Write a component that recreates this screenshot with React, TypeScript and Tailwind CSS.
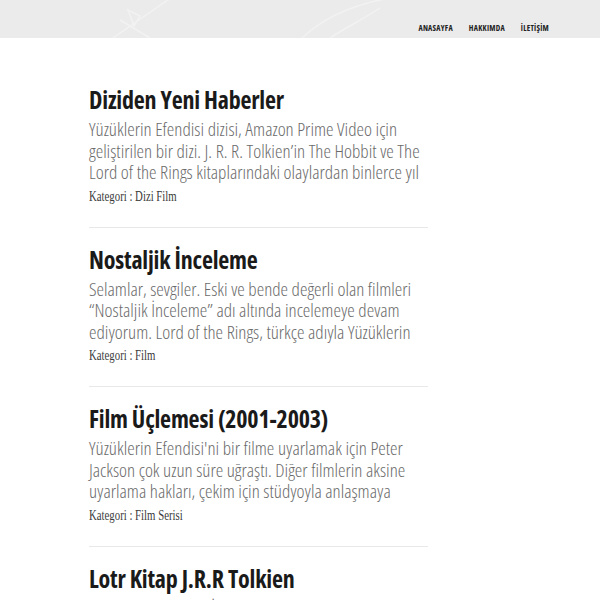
import React from "react";

const posts = [
  {
    title: "Diziden Yeni Haberler",
    body: "Yüzüklerin Efendisi dizisi, Amazon Prime Video için geliştirilen bir dizi. J. R. R. Tolkien’in The Hobbit ve The Lord of the Rings kitaplarındaki olaylardan binlerce yıl",
    cat: "Dizi Film",
  },
  {
    title: "Nostaljik İnceleme",
    body: "Selamlar, sevgiler. Eski ve bende değerli olan filmleri “Nostaljik İnceleme” adı altında incelemeye devam ediyorum. Lord of the Rings, türkçe adıyla Yüzüklerin",
    cat: "Film",
  },
  {
    title: "Film Üçlemesi (2001-2003)",
    body: "Yüzüklerin Efendisi'ni bir filme uyarlamak için Peter Jackson çok uzun süre uğraştı. Diğer filmlerin aksine uyarlama hakları, çekim için stüdyoyla anlaşmaya",
    cat: "Film Serisi",
  },
  {
    title: "Lotr Kitap J.R.R Tolkien",
    body: "Yüzüklerin Efendisi, İngiliz yazar J. R. R. Tolkien tarafından yazılmış fantastik bir roman serisidir.",
    cat: "Kitap",
  },
];

export default function App() {
  return (
    <div className="w-[600px] h-[600px] overflow-hidden bg-white" style={{ fontFamily: "'Open Sans', sans-serif" }}>
      <header className="relative h-[38px] bg-[#ebebeb] overflow-hidden">
        <svg className="absolute left-0 top-0" width="600" height="38" viewBox="0 0 600 38">
          <g fill="none" stroke="#f2f2f2" strokeWidth="1.5">
            <path d="M110 40 L175 -5" />
            <path d="M120 20 L150 38" />
            <path d="M128 10 L140 16 L134 26 Z" />
            <path d="M300 40 C320 20 350 5 390 -2" />
            <path d="M330 38 C345 28 365 18 380 8" />
          </g>
        </svg>
        <nav className="absolute right-[51px] top-[22px] flex gap-[16px] text-[8px] font-bold text-[#222] tracking-[0.25px] [font-stretch:75%]">
          <span>ANASAYFA</span>
          <span>HAKKIMDA</span>
          <span>İLETİŞİM</span>
        </nav>
      </header>
      <main className="pl-[89px] w-[428px] pt-[46px]">
        {posts.map((p, i) => (
          <article key={i} className="border-b border-[#e8e8e8] pb-[22px] mb-[16px]">
            <h2 className="text-[24px] font-bold leading-[32px] tracking-[-0.2px] text-[#1a1a1a] [font-stretch:75%]">{p.title}</h2>
            <p className="mt-[3px] text-[19px] font-light leading-[21.5px] text-[#6b6b6b] [font-stretch:75%]">
              {p.body}
            </p>
            <div className="mt-[5px] h-[16px] text-[14px] leading-[16px] text-[#3a3a3a]" style={{ fontFamily: "'Liberation Serif', serif" }}>
              <span className="inline-block whitespace-nowrap origin-left scale-x-[0.77]">Kategori : {p.cat}</span>
            </div>
          </article>
        ))}
      </main>
    </div>
  );
}
